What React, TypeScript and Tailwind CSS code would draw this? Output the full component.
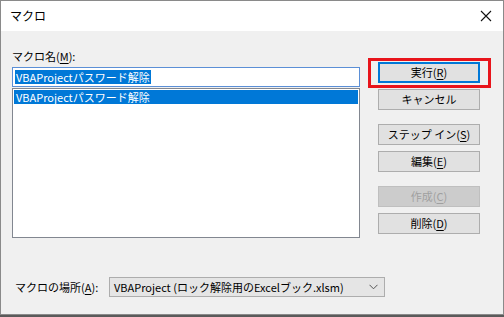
import React from 'react';

const font = { fontFamily: '"Noto Sans CJK JP", "Noto Sans", sans-serif' };

function Key({ children }: { children: React.ReactNode }) {
  return <span className="underline underline-offset-2">{children}</span>;
}

function Btn({
  children,
  disabled,
  primary,
  className = '',
}: {
  children: React.ReactNode;
  disabled?: boolean;
  primary?: boolean;
  className?: string;
}) {
  const look = disabled
    ? 'bg-[#cccccc] border-[#bfbfbf] text-[#a0a0a0]'
    : primary
    ? 'bg-[#e1e1e1] border-[#0078d7] shadow-[inset_0_0_0_1px_#0078d7] text-black'
    : 'bg-[#e1e1e1] border-[#adadad] text-black';
  return (
    <div
      className={`h-[21px] w-[102px] border flex items-center justify-center text-[11px] leading-none ${look} ${className}`}
    >
      {children}
    </div>
  );
}

export default function App() {
  return (
    <div className="w-[504px] h-[317px] bg-[#5a5a5a]" style={font}>
      <div className="w-[504px] h-[315px] border border-[#8a8a8a] bg-[#f0f0f0] flex flex-col">
        {/* title bar */}
        <div className="h-[30px] bg-white flex items-center justify-between pl-[9px] pr-[9px]">
          <span className="text-[12px] text-black">マクロ</span>
          <svg width="12" height="12" viewBox="0 0 12 12" className="mr-[2px]">
            <path d="M1 1 L11 11 M11 1 L1 11" stroke="#111" strokeWidth="1.1" />
          </svg>
        </div>

        {/* body */}
        <div className="flex-1 flex flex-col pl-[11px]">
          <div className="flex">
            <div className="w-[348px] flex flex-col">
              <div className="mt-[17px] h-[16px] text-[11px] leading-[16px] text-black">
                マクロ名(<Key>M</Key>):
              </div>
              <div className="mt-[3px] h-[20px] border border-[#5b8fd6] bg-white flex items-center pl-[2px]">
                <span className="bg-[#0078d7] text-white text-[11px] leading-[14px] px-[1px]">
                  VBAProjectパスワード解除
                </span>
              </div>
              <div className="mt-[1px] h-[150px] border border-[#828790] bg-white p-[1px]">
                <div className="h-[14px] bg-[#0078d7] text-white text-[11px] leading-[14px] pl-[2px]">
                  VBAProjectパスワード解除
                </div>
              </div>
            </div>

            <div className="ml-[18px] flex flex-col mt-[31px]">
              <div className="relative">
                <Btn primary>
                  実行(<Key>R</Key>)
                </Btn>
                <div className="absolute left-[-10px] top-[-4px] right-[-11px] bottom-[-5px] border-[3px] border-[#e8141b]" />
              </div>
              <Btn className="mt-[6px]">キャンセル</Btn>
              <Btn className="mt-[14px]">
                ステップ イン(<Key>S</Key>)
              </Btn>
              <Btn className="mt-[6px]">
                編集(<Key>E</Key>)
              </Btn>
              <Btn disabled className="mt-[14px]">
                作成(<Key>C</Key>)
              </Btn>
              <Btn className="mt-[6px]">
                削除(<Key>D</Key>)
              </Btn>
            </div>
          </div>

          <div className="mt-[39px] flex items-center">
            <span className="ml-[3px] w-[94px] text-[11px] text-black">
              マクロの場所(<Key>A</Key>):
            </span>
            <div className="w-[276px] h-[20px] border border-[#adadad] bg-[#e5e5e5] flex items-center justify-between pl-[4px] pr-[6px]">
              <span className="text-[11px] text-black leading-none">
                VBAProject (ロック解除用のExcelブック.xlsm)
              </span>
              <svg width="9" height="6" viewBox="0 0 9 6">
                <path d="M0.5 0.8 L4.5 4.8 L8.5 0.8" stroke="#555" fill="none" strokeWidth="1" />
              </svg>
            </div>
          </div>
        </div>
      </div>
    </div>
  );
}
